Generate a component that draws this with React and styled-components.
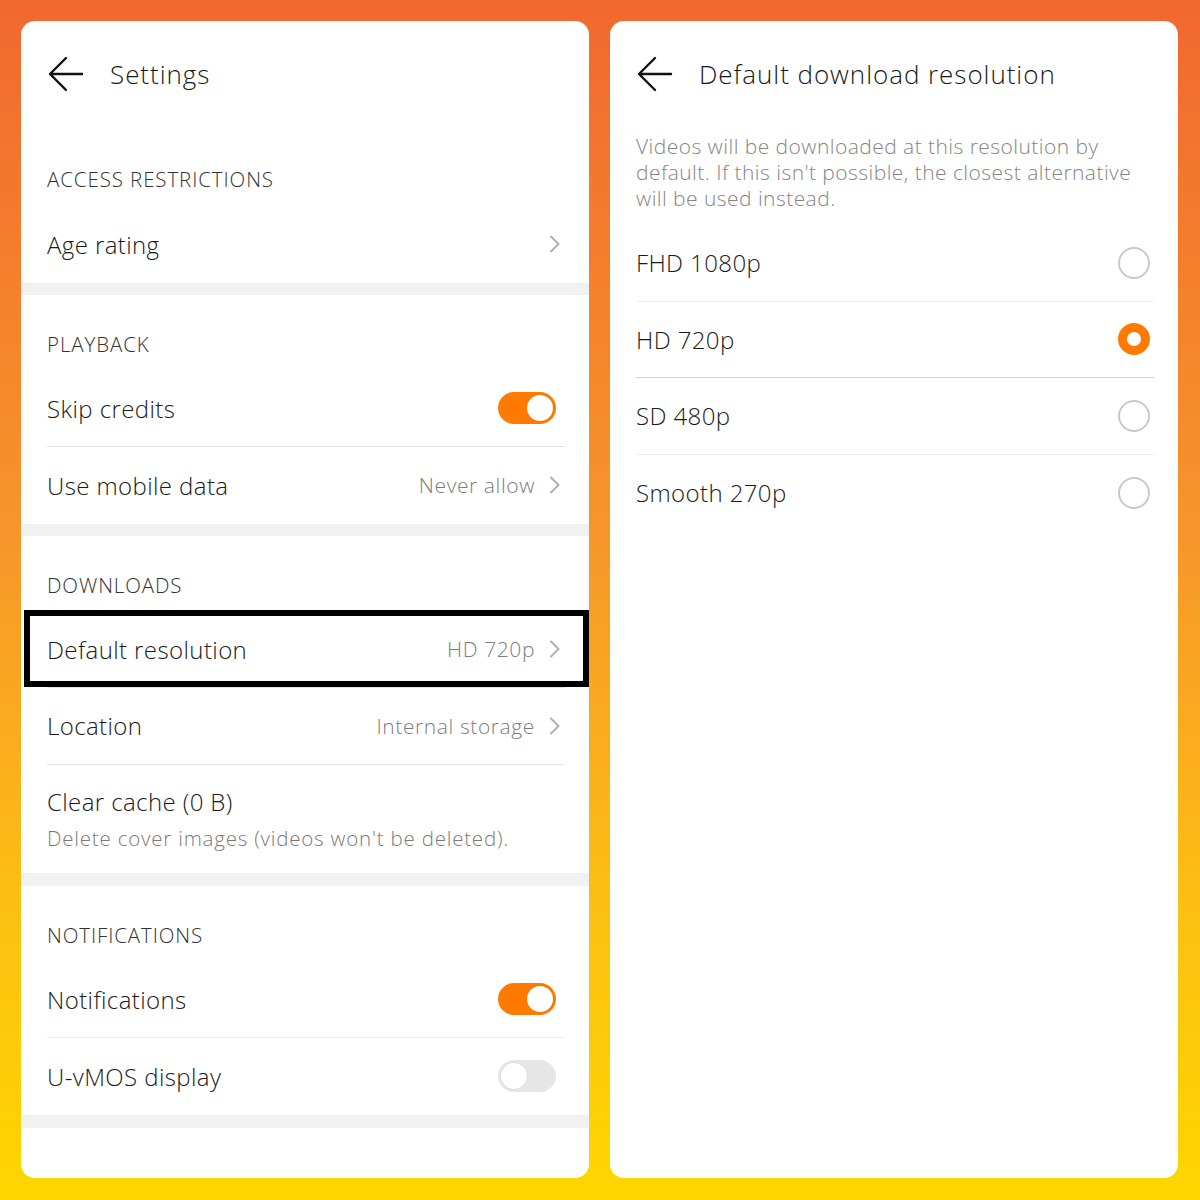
import React from 'react';
import styled, { createGlobalStyle } from 'styled-components';

const GlobalStyle = createGlobalStyle`
  body {
    margin: 0;
    font-family: "Open Sans", "Noto Sans", sans-serif;
  }
`;

const Page = styled.div`
  width: 1200px;
  height: 1200px;
  box-sizing: border-box;
  padding: 21px 22px 22px 21px;
  background: linear-gradient(180deg, #f1682f 0%, #f7962a 45%, #fcbf13 75%, #ffd600 100%);
  display: grid;
  grid-template-columns: 568px 568px;
  column-gap: 21px;
`;

const Panel = styled.div`
  background: #fff;
  border-radius: 14px;
  overflow: hidden;
  display: flex;
  flex-direction: column;
`;

const Header = styled.div`
  height: 109px;
  flex-shrink: 0;
  box-sizing: border-box;
  padding: 0 0 3px 27px;
  display: flex;
  align-items: center;
  gap: 26px;
`;

const Title = styled.div`
  font-size: 26px;
  font-weight: 300;
  letter-spacing: 0.95px;
  color: #1a1a1a;
`;

const Band = styled.div`
  height: ${({ h }) => h || 12}px;
  flex-shrink: 0;
  background: #f1f1f1;
`;

const Section = styled.div`
  padding: 0 24px 0 26px;
`;

const SectionTitle = styled.div`
  height: 76px;
  box-sizing: border-box;
  padding-top: 37px;
  font-size: 20.5px;
  line-height: 24px;
  font-weight: 300;
  letter-spacing: 0.9px;
  color: #333;
`;

const Row = styled.div`
  position: relative;
  min-height: ${({ tall }) => (tall ? 108 : 76.5)}px;
  display: flex;
  align-items: center;
  justify-content: space-between;
  box-sizing: border-box;
  border-bottom: ${({ divider }) => (divider ? `1px solid ${divider}` : 'none')};

  ${({ highlight }) =>
    highlight &&
    `
    &::after {
      content: '';
      position: absolute;
      top: -2px;
      bottom: 0;
      left: -23px;
      right: -24px;
      border: 6px solid #000;
    }
  `}
`;

const Label = styled.div`
  font-size: 24px;
  font-weight: 300;
  letter-spacing: 0.4px;
  color: #1a1a1a;
`;

const LabelGroup = styled.div`
  display: flex;
  flex-direction: column;
  gap: 6px;
`;

const SubLabel = styled.div`
  font-size: 20.5px;
  font-weight: 300;
  letter-spacing: 0.8px;
  color: #7a7a7a;
`;

const Trail = styled.div`
  display: flex;
  align-items: center;
  gap: 14px;
  padding-right: 4px;
`;

const Value = styled.span`
  font-size: 21px;
  font-weight: 300;
  letter-spacing: 0.6px;
  color: #7d7d7d;
`;

const Toggle = styled.div`
  width: 58px;
  height: 32px;
  border-radius: 16px;
  box-sizing: border-box;
  margin-right: 9px;
  background: ${({ on }) => (on ? '#ff7a00' : '#e6e6e6')};
  display: flex;
  align-items: center;
  justify-content: ${({ on }) => (on ? 'flex-end' : 'flex-start')};
  padding: 0 3px;
`;

const Knob = styled.div`
  width: 26px;
  height: 26px;
  border-radius: 50%;
  background: #fff;
  box-shadow: 0 0 0 1px rgba(0, 0, 0, 0.04);
`;

const Description = styled.div`
  margin: 3px 24px 14px 26px;
  font-size: 21px;
  line-height: 26px;
  font-weight: 300;
  letter-spacing: 0.45px;
  color: #858585;
`;

const Radio = styled.div`
  width: 32px;
  height: 32px;
  border-radius: 50%;
  box-sizing: border-box;
  margin-right: 4px;
  border: ${({ checked }) => (checked ? '9px solid #ff7a00' : '2px solid #c9c9c9')};
  background: #fff;
`;

const BackArrow = () => (
  <svg width="36" height="36" viewBox="0 0 36 36" fill="none">
    <path d="M34 18H3M18 2L2 18L18 34" stroke="#111" strokeWidth="2.4" strokeLinecap="round" strokeLinejoin="round" />
  </svg>
);

const Chevron = () => (
  <svg width="12" height="18" viewBox="0 0 12 18" fill="none">
    <path d="M2 1.5L9.5 9L2 16.5" stroke="#b0b0b0" strokeWidth="2" strokeLinecap="round" strokeLinejoin="round" />
  </svg>
);

const resolutions = [
  { label: 'FHD 1080p', divider: '#f0f0f0' },
  { label: 'HD 720p', checked: true, divider: '#d2d2d2' },
  { label: 'SD 480p', divider: '#ececec' },
  { label: 'Smooth 270p' },
];

const App = () => (
  <>
    <GlobalStyle />
    <Page>
      <Panel>
        <Header>
          <BackArrow />
          <Title>Settings</Title>
        </Header>
        <Section>
          <SectionTitle>ACCESS RESTRICTIONS</SectionTitle>
          <Row>
            <Label>Age rating</Label>
            <Trail><Chevron /></Trail>
          </Row>
        </Section>
        <Band />
        <Section>
          <SectionTitle>PLAYBACK</SectionTitle>
          <Row divider="#e3e3e3">
            <Label>Skip credits</Label>
            <Toggle on><Knob /></Toggle>
          </Row>
          <Row>
            <Label>Use mobile data</Label>
            <Trail><Value>Never allow</Value><Chevron /></Trail>
          </Row>
        </Section>
        <Band />
        <Section>
          <SectionTitle>DOWNLOADS</SectionTitle>
          <Row highlight divider="#e3e3e3">
            <Label>Default resolution</Label>
            <Trail><Value>HD 720p</Value><Chevron /></Trail>
          </Row>
          <Row divider="#e3e3e3">
            <Label>Location</Label>
            <Trail><Value>Internal storage</Value><Chevron /></Trail>
          </Row>
          <Row tall>
            <LabelGroup>
              <Label>Clear cache (0 B)</Label>
              <SubLabel>Delete cover images (videos won't be deleted).</SubLabel>
            </LabelGroup>
          </Row>
        </Section>
        <Band h={13} />
        <Section>
          <SectionTitle>NOTIFICATIONS</SectionTitle>
          <Row divider="#eeeeee">
            <Label>Notifications</Label>
            <Toggle on><Knob /></Toggle>
          </Row>
          <Row>
            <Label>U-vMOS display</Label>
            <Toggle><Knob /></Toggle>
          </Row>
        </Section>
        <Band h={13} />
      </Panel>

      <Panel>
        <Header>
          <BackArrow />
          <Title>Default download resolution</Title>
        </Header>
        <Description>
          Videos will be downloaded at this resolution by default. If this isn't possible, the closest alternative will be used instead.
        </Description>
        <Section>
          {resolutions.map((r) => (
            <Row key={r.label} divider={r.divider}>
              <Label>{r.label}</Label>
              <Radio checked={r.checked} />
            </Row>
          ))}
        </Section>
      </Panel>
    </Page>
  </>
);

export default App;
